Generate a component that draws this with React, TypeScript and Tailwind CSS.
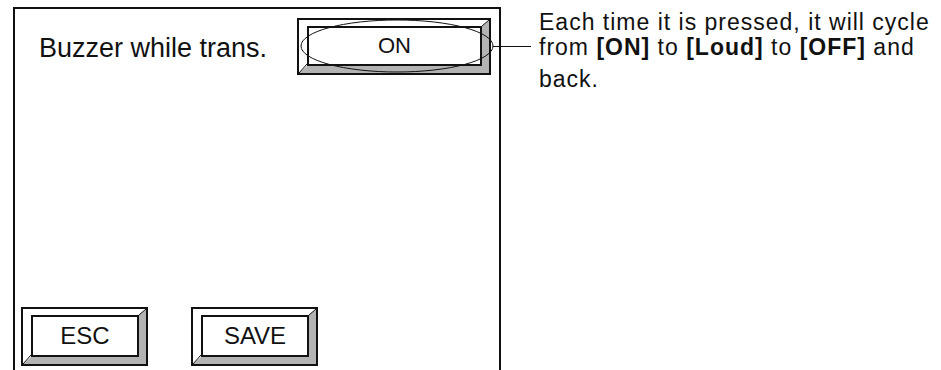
import React from "react";

function BevelButton({
  outer,
  text,
  label,
  bl,
  tr,
}: {
  outer: string;
  text: string;
  label: string;
  bl: [number, number, number, number];
  tr: [number, number, number, number];
}) {
  return (
    <div className={`relative border-2 border-[#111] bg-white ${outer}`}>
      <div className="h-full border-t-[6px] border-l-[8px] border-r-[7px] border-b-[7px] border-t-white border-l-white border-r-[#b3b3b3] border-b-[#b3b3b3]">
        <div className={`h-full border-2 border-[#111] bg-white flex items-center justify-center text-[#111] ${text}`}>
          {label}
        </div>
      </div>
      <svg className="absolute inset-0 w-full h-full overflow-visible pointer-events-none">
        <line x1={bl[0]} y1={bl[1]} x2={bl[2]} y2={bl[3]} stroke="#111" strokeWidth="1" />
        <line x1={tr[0]} y1={tr[1]} x2={tr[2]} y2={tr[3]} stroke="#111" strokeWidth="1" />
      </svg>
    </div>
  );
}

export default function App() {
  return (
    <div className="relative w-[941px] h-[370px] bg-white flex font-['Liberation_Sans',Arial,sans-serif] text-[#111] overflow-hidden">
      <div className="ml-[13px] mt-[7px] w-[488px] h-[363px] border-2 border-b-0 border-[#111] flex flex-col justify-between pb-[4px]">
        <div className="flex items-center justify-between pt-[9px] pl-[24px] pr-[8px]">
          <span className="text-[27px] leading-none mt-[3px]">Buzzer while trans.</span>
          <div className="relative">
            <BevelButton
              outer="w-[194px] h-[57px]"
              text="text-[22px] leading-none"
              label="ON"
              bl={[0, 53, 8, 44]}
              tr={[190, 0, 183, 6]}
            />
            <svg className="absolute left-0 top-0 w-[240px] h-[57px] overflow-visible pointer-events-none">
              <ellipse cx="100" cy="28" rx="96" ry="26" fill="none" stroke="#111" strokeWidth="1" />
              <line x1="196" y1="28.5" x2="234" y2="28.5" stroke="#111" strokeWidth="1" />
            </svg>
          </div>
        </div>
        <div className="flex gap-[43px] pl-[6px]">
          <BevelButton
            outer="w-[127px] h-[59px]"
            text="text-[24px] leading-none"
            label="ESC"
            bl={[0, 55, 8, 46]}
            tr={[123, 0, 116, 6]}
          />
          <BevelButton
            outer="w-[127px] h-[59px]"
            text="text-[24px] leading-none"
            label="SAVE"
            bl={[0, 55, 8, 46]}
            tr={[123, 0, 116, 6]}
          />
        </div>
      </div>
      <div className="ml-[38px] mt-[10px] text-[23px] leading-[25px] tracking-[1px] text-[#111] whitespace-nowrap">
        <div>Each time it is pressed, it will cycle</div>
        <div>
          from <b>[ON]</b> to <b>[Loud]</b> to <b>[OFF]</b> and
        </div>
        <div className="mt-[7px]">back.</div>
      </div>
    </div>
  );
}
